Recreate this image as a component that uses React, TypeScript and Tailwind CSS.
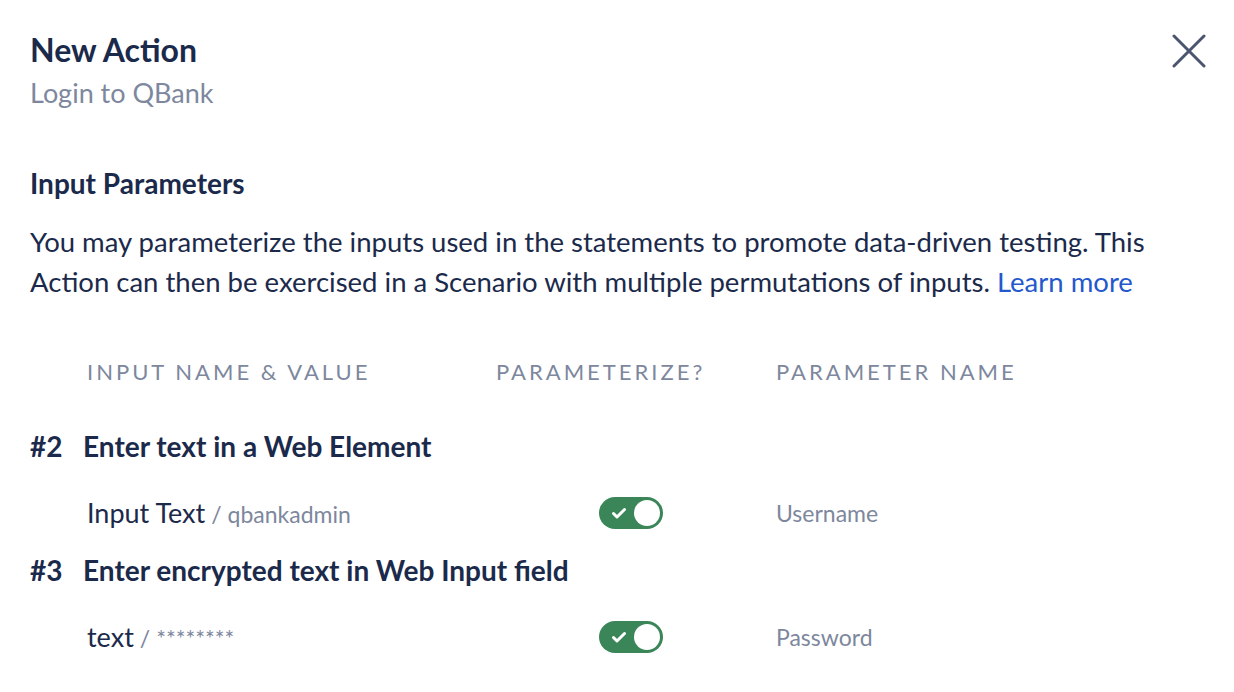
import React from "react";

const rows = [
  {
    num: "#2",
    title: "Enter text in a Web Element",
    input: "Input Text",
    value: "qbankadmin",
    param: "Username",
  },
  {
    num: "#3",
    title: "Enter encrypted text in Web Input field",
    input: "text",
    value: "********",
    param: "Password",
  },
];

function Toggle() {
  return (
    <div className="relative w-[64px] h-[32px] rounded-full bg-[#3b8659]">
      <svg
        className="absolute left-[12px] top-[10px]"
        width="16"
        height="12"
        viewBox="0 0 16 12"
        fill="none"
      >
        <path d="M2.5 6.5l3.5 3.5 7.5-7.5" stroke="white" strokeWidth="3" strokeLinecap="round" strokeLinejoin="round" />
      </svg>
      <div className="absolute right-[3px] top-[3px] w-[26px] h-[26px] rounded-full bg-white" />
    </div>
  );
}

export default function App() {
  return (
    <div
      className="w-[1234px] h-[692px] bg-white text-[#1b2a4b] overflow-hidden"
      style={{ fontFamily: "Lato, 'Open Sans', sans-serif" }}
    >
      <div className="flex justify-between pl-[30px] pr-[28px] pt-[31px]">
        <div>
          <h1 className="text-[32px] leading-[38px] font-bold">New Action</h1>
          <p className="text-[27px] leading-[32px] mt-[8px] text-[#7d879d]">Login to QBank</p>
        </div>
        <button className="mt-[3px] w-[34px] h-[34px] text-[#4a5570]">
          <svg width="34" height="34" viewBox="0 0 34 34" fill="none">
            <path d="M2 2l30 30M32 2L2 32" stroke="currentColor" strokeWidth="3" strokeLinecap="round" />
          </svg>
        </button>
      </div>

      <div className="px-[30px] mt-[58px]">
        <h2 className="text-[28px] leading-[32px] font-bold">Input Parameters</h2>
        <p className="text-[27.5px] leading-[40px] mt-[23px] whitespace-nowrap">
          You may parameterize the inputs used in the statements to promote data-driven testing. This
          <br />
          Action can then be exercised in a Scenario with multiple permutations of inputs.{" "}
          <a className="text-[#2458cc]">Learn more</a>
        </p>

        <div className="grid grid-cols-[409px_280px_1fr] pl-[57px] mt-[56px] text-[22px] leading-[28px] tracking-[3px] text-[#7d879d]">
          <span>INPUT NAME &amp; VALUE</span>
          <span>PARAMETERIZE?</span>
          <span>PARAMETER NAME</span>
        </div>

        <div className="mt-[42px]">
          {rows.map((r, i) => (
            <div key={r.num} className={i > 0 ? "mt-[19px]" : ""}>
              <div className="flex text-[28px] leading-[36px] font-bold">
                <span className="w-[53px]">{r.num}</span>
                <span>{r.title}</span>
              </div>
              <div className="grid grid-cols-[512px_177px_1fr] items-center pl-[57px] mt-[29px] h-[40px]">
                <div className="flex items-baseline">
                  <span className="text-[27px] leading-[36px]">{r.input}</span>
                  <span className="text-[23px] text-[#7d879d] ml-[6px]">/ {r.value}</span>
                </div>
                <Toggle />
                <span className="text-[23px] text-[#7d879d]">{r.param}</span>
              </div>
            </div>
          ))}
        </div>
      </div>
    </div>
  );
}
